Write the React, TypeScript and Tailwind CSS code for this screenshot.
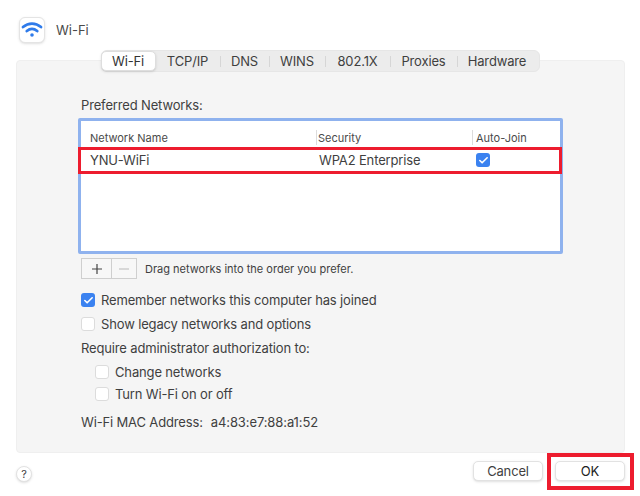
import { Fragment } from "react";
import { Check } from "lucide-react";

const tabs = ["Wi-Fi", "TCP/IP", "DNS", "WINS", "802.1X", "Proxies", "Hardware"];
const tabWidths = ["w-[55px] -ml-px", "w-[64px]", "w-[48px]", "w-[55px]", "w-[64px]", "w-[66px]", "w-[81px] pr-[2px]"];

const Box = ({ on }: { on?: boolean }) =>
  on ? (
    <span className="w-[14px] h-[14px] rounded-[3px] bg-[#3b82f0] flex items-center justify-center shrink-0">
      <Check className="w-[11px] h-[11px] text-white" strokeWidth={3.5} />
    </span>
  ) : (
    <span className="w-[14px] h-[14px] rounded-[3px] bg-white border border-[#dcdcdc] shrink-0" />
  );

const CheckRow = ({ label, on, className }: { label: string; on?: boolean; className?: string }) => (
  <div className={`flex items-center gap-[6px] h-[14px] ${className}`}>
    <Box on={on} />
    <span>{label}</span>
  </div>
);

export default function App() {
  return (
    <div className="relative w-[640px] h-[496px] bg-white overflow-hidden text-[13px] leading-4 tracking-[-0.15px] text-[#3f3f3f] font-['Inter',sans-serif]">
      {/* title */}
      <div className="flex items-center gap-[11px] pl-[19px] pt-[17px] h-[43px]">
        <div className="w-[26px] h-[26px] rounded-[6px] bg-white border border-[#e4e4e4] shadow-sm flex items-center justify-center">
          <svg viewBox="0 0 24 24" className="w-[24px] h-[24px]" fill="none" stroke="#2f7bea" strokeWidth={2.8} strokeLinecap="round">
            <path d="M3 9c5.4-4.6 12.600-4.600 18 0" />
            <path d="M6.800 13c3.200-2.600 7.200-2.600 10.400 0" />
            <circle cx="12" cy="17" r="1.800" fill="#2f7bea" stroke="none" />
          </svg>
        </div>
        <span className="text-[#4a4a4a] text-[13px] tracking-normal">Wi-Fi</span>
      </div>

      {/* panel */}
      <div className="mx-4 mt-[17px] w-[609px] h-[393px] bg-[#f5f5f5] rounded-[4px] border border-[#efefef]">
        <div className="flex justify-center -mt-[11px] -ml-[1px]">
          <div className="flex items-center h-[22px] rounded-[6px] bg-[#ececec] border border-[#e6e6e6]">
            {tabs.map((t, i) => (
              <Fragment key={t}>
                {i > 1 && <span className="w-px h-[11px] bg-[#d6d6d6]" />}
                <div
                  className={`${tabWidths[i]} h-full flex items-center justify-center ${
                    i === 0 ? "bg-white rounded-[5px] shadow-sm border border-[#dedede] text-[#333]" : ""
                  }`}
                >
                  {t}
                </div>
              </Fragment>
            ))}
          </div>
        </div>

        <div className="pl-[61px] pr-[60px]">
          <div className="pt-[25px] pl-[3px]">Preferred Networks:</div>

          {/* table */}
          <div className="mt-[5px] w-[485px] h-[136px] bg-white border-[3px] border-[#8fb2ee] rounded-[2px]">
            <div className="flex items-center h-[25px] pt-[8px] text-[11px] tracking-normal text-[#4a4a4a]">
              <div className="w-[236px] pl-[9px] h-[15px] flex items-center border-r border-[#dcdcdc]">Network Name</div>
              <div className="w-[156px] pl-[1px] h-[15px] flex items-center border-r border-[#dcdcdc]">Security</div>
              <div className="pl-[3px]">Auto-Join</div>
            </div>
            <div className="flex items-center h-[28px] text-[13px]">
              <div className="w-[236px] pl-[9px]">YNU-WiFi</div>
              <div className="w-[156px] pl-[2px]">WPA2 Enterprise</div>
              <div className="pl-[3px]">
                <Box on />
              </div>
            </div>
          </div>

          {/* add / remove */}
          <div className="flex items-center mt-[4px] ml-[3px]">
            <div className="flex h-[21px] border border-[#cfcfcf] bg-[#f7f7f7]">
              <div className="w-[30px] flex items-center justify-center border-r border-[#cfcfcf]">
                <svg viewBox="0 0 12 12" className="w-[12px] h-[12px]" stroke="#444" strokeWidth={1.2}>
                  <path d="M6 1v10M1 6h10" />
                </svg>
              </div>
              <div className="w-[24px] flex items-center justify-center">
                <svg viewBox="0 0 12 12" className="w-[12px] h-[12px]" stroke="#c4c4c4" strokeWidth={1.2}>
                  <path d="M1 6h10" />
                </svg>
              </div>
            </div>
            <span className="ml-2 pt-[1px] text-[11px] tracking-normal">Drag networks into the order you prefer.</span>
          </div>

          <div className="ml-[3px]">
            <CheckRow on label="Remember networks this computer has joined" className="mt-[14px]" />
            <CheckRow label="Show legacy networks and options" className="mt-[10px]" />
            <div className="mt-[9px]">Require administrator authorization to:</div>
            <CheckRow label="Change networks" className="mt-[9px] ml-[14px]" />
            <CheckRow label="Turn Wi-Fi on or off" className="mt-[8px] ml-[14px]" />
            <div className="mt-[13px] flex gap-[8px]">
              <span>Wi-Fi MAC Address:</span>
              <span className="tracking-[-0.1px]">a4:83:e7:88:a1:52</span>
            </div>
          </div>
        </div>
      </div>

      {/* footer */}
      <div className="flex items-start pl-[16px] pr-[15px]">
        <div className="mt-[13px] w-[16px] h-[16px] rounded-full bg-white border border-[#e2e2e2] shadow-sm flex items-center justify-center text-[11px]">?</div>
        <div className="ml-auto mt-[8px] flex gap-[12px]">
          <div className="w-[70px] h-[20px] rounded-[5px] bg-white border border-[#e2e2e2] shadow-sm flex items-center justify-center">Cancel</div>
          <div className="w-[70px] h-[20px] rounded-[5px] bg-white border border-[#e2e2e2] shadow-sm flex items-center justify-center text-[#222]">OK</div>
        </div>
      </div>

      {/* red callouts */}
      <div className="absolute left-[78px] top-[147px] w-[484px] h-[27px] border-[3px] border-[#ed1c2e]" />
      <div className="absolute left-[547px] top-[453px] w-[87px] h-[37px] border-[4px] border-[#ed1c2e]" />
    </div>
  );
}
